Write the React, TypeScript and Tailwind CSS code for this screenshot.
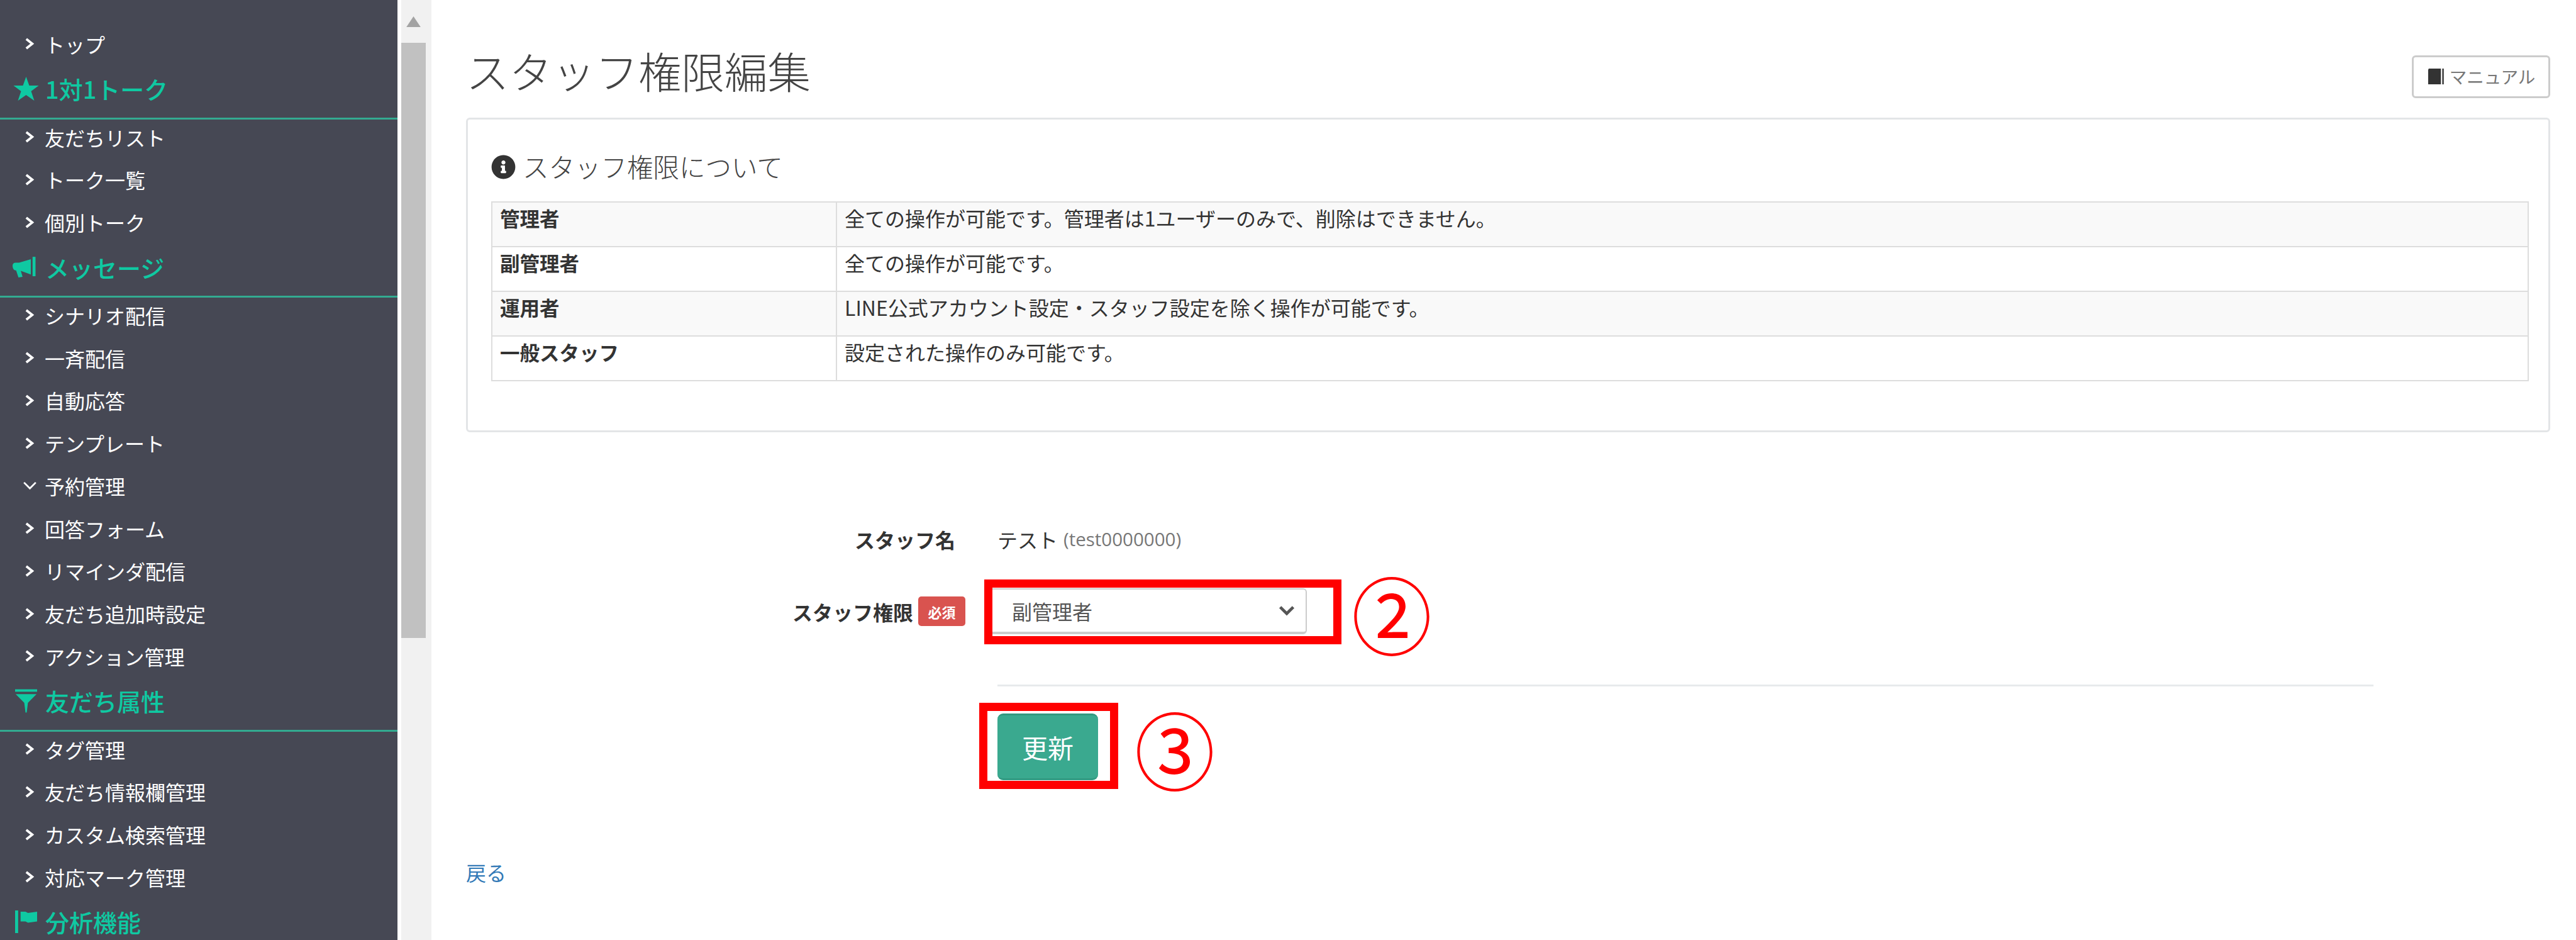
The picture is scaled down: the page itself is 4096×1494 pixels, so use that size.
import { FaInfoCircle } from "react-icons/fa";
import type { ReactNode } from "react";

const jp = "font-['Noto_Sans_CJK_JP','Noto_Sans_CJK_SC',sans-serif]";

const Star = () => (
  <svg viewBox="0 0 40 38" className="h-[38px] w-[41px]" fill="#0fc9a2">
    <path d="M20 0l5 14h15L28 23l5 15-13-9-13 9 5-15L0 14h15z" />
  </svg>
);

const Bullhorn = () => (
  <svg viewBox="0 0 46 36" className="h-[34px] w-[45px]" fill="#0fc9a2">
    <path d="M0 15c0-3 2-5 5-5h6L31 4v26L14 24l3 10-7 1-4-12H5c-3 0-5-4-5-8z" />
    <rect x="34" y="0" width="5" height="33" />
  </svg>
);

const Filter = () => (
  <svg viewBox="0 0 36 38" className="h-[38px] w-[35px]" fill="#0fc9a2">
    <rect x="0" y="0" width="36" height="4" />
    <path d="M1 8h34L21 22l-2 16h-2l-2-16z" />
  </svg>
);

const Flag = () => (
  <svg viewBox="0 0 36 37" className="h-[36px] w-[35px]" fill="#0fc9a2">
    <rect x="0" y="0" width="5" height="37" />
    <path d="M9 2h8l4 2 15-2v16l-15 2-4-2H9z" />
  </svg>
);

const Book = () => (
  <svg viewBox="0 0 28 29" className="h-[28px] w-[27px]">
    <path d="M3 1h20v26H2V3z" fill="#333" />
    <rect x="25" y="1" width="3" height="26" fill="#555" />
  </svg>
);

const Chevron = ({ open }: { open?: boolean }) => (
  <span className="flex w-[36px] shrink-0 justify-center">
    {open ? (
      <svg viewBox="0 0 24 15" className="h-[14px] w-[23px]" fill="none" stroke="#fff" strokeWidth="3">
        <path d="M2 2l10 10L22 2" />
      </svg>
    ) : (
      <svg viewBox="0 0 18 20" className="h-[19px] w-[17px]" fill="none" stroke="#fff" strokeWidth="4">
        <path d="M3 2l10 8-10 8" />
      </svg>
    )}
  </span>
);

const NavItem = ({ label, open }: { label: string; open?: boolean }) => (
  <div className="flex h-[67.75px] items-center pb-[12px] pl-[29px] text-[32px] leading-none text-white">
    <Chevron open={open} />
    <span className="ml-[6px]">{label}</span>
  </div>
);

const NavHeader = ({ icon, label }: { icon: ReactNode; label: string }) => (
  <div className="flex h-[80px] items-center border-b-[3px] border-[#33ab91] pb-[14px] pl-[20px] text-[38px] font-medium leading-none text-[#0fc9a2]">
    <span className="flex w-[43px] shrink-0 justify-center">{icon}</span>
    <span className="ml-[9px]">{label}</span>
  </div>
);

const roles = [
  ["管理者", "全ての操作が可能です。管理者は1ユーザーのみで、削除はできません。"],
  ["副管理者", "全ての操作が可能です。"],
  ["運用者", "LINE公式アカウント設定・スタッフ設定を除く操作が可能です。"],
  ["一般スタッフ", "設定された操作のみ可能です。"],
];

const RedBox = ({ className }: { className: string }) => (
  <div className={`absolute border-[13px] border-[#ff0000] ${className}`} />
);

export default function App() {
  return (
    <div className={`flex h-[1494px] w-[4096px] overflow-hidden bg-white text-[#333] ${jp}`}>
      <aside className="h-full w-[632px] shrink-0 bg-[#464854] pt-[42px]">
        <NavItem label="トップ" />
        <NavHeader icon={<Star />} label="1対1トーク" />
        <NavItem label="友だちリスト" />
        <NavItem label="トーク一覧" />
        <NavItem label="個別トーク" />
        <NavHeader icon={<Bullhorn />} label="メッセージ" />
        <NavItem label="シナリオ配信" />
        <NavItem label="一斉配信" />
        <NavItem label="自動応答" />
        <NavItem label="テンプレート" />
        <NavItem label="予約管理" open />
        <NavItem label="回答フォーム" />
        <NavItem label="リマインダ配信" />
        <NavItem label="友だち追加時設定" />
        <NavItem label="アクション管理" />
        <NavHeader icon={<Filter />} label="友だち属性" />
        <NavItem label="タグ管理" />
        <NavItem label="友だち情報欄管理" />
        <NavItem label="カスタム検索管理" />
        <NavItem label="対応マーク管理" />
        <NavHeader icon={<Flag />} label="分析機能" />
      </aside>

      {/* scrollbar */}
      <div className="h-full w-[54px] shrink-0 border-l-[6px] border-white bg-[#f1f1f1] pr-[9px]">
        <div className="flex h-[68px] items-center justify-center">
          <svg viewBox="0 0 24 18" className="h-[17px] w-[23px]" fill="#a3a3a3">
            <path d="M12 0l12 18H0z" />
          </svg>
        </div>
        <div className="h-[946px] bg-[#c1c1c1]" />
      </div>

      <main className="min-w-0 flex-1 pl-[55px] pr-[41px]">
        <div className="flex h-[187px] items-end justify-between pb-[31px]">
          <h1 className="mb-[10px] text-[68.5px] font-light leading-[68px] text-[#444]">スタッフ権限編集</h1>
          <button className="flex h-[68px] w-[220px] items-center justify-center gap-[9px] rounded-[6px] border-[3px] border-[#ccc] text-[27.5px] leading-none text-[#777]">
            <Book />
            マニュアル
          </button>
        </div>

        <section className="h-[500px] rounded-[6px] border-[3px] border-[#e3e5e7] pl-[37px] pr-[31px] pt-[50px]">
          <h2 className="mb-[30px] flex h-[50px] items-center gap-[11px] text-[41.5px] font-light leading-none text-[#444]">
            <FaInfoCircle size={39} className="text-[#333]" />
            スタッフ権限について
          </h2>
          <table className="w-full table-fixed border-collapse border-[2px] border-[#ddd] text-[32px] leading-[46px]">
            <tbody>
              {roles.map(([name, desc], i) => (
                <tr key={name} className={`h-[71px] ${i % 2 === 0 ? "bg-[#f9f9f9]" : "bg-white"}`}>
                  <th className="w-[548px] border-[2px] border-[#ddd] pb-[22px] pl-[12px] text-left text-[31.5px] font-bold">{name}</th>
                  <td className="border-[2px] border-[#ddd] pb-[22px] pl-[12px]">{desc}</td>
                </tr>
              ))}
            </tbody>
          </table>
        </section>

        <div className="mt-[133px] flex h-[73px] items-center text-[32px] leading-none">
          <label className="w-[845px] pr-[67px] text-right font-bold">スタッフ名</label>
          <span>テスト</span>
          <span className="ml-[9px] font-['Open_Sans',sans-serif] text-[29.5px] text-[#777]">(test0000000)</span>
        </div>

        <div className="mt-[42px] flex h-[73px] items-center text-[32px] leading-none">
          <div className="flex w-[845px] items-center justify-end gap-[8px] pr-[51px]">
            <label className="font-bold">スタッフ権限</label>
            <span className="flex h-[47px] w-[75px] items-center justify-center rounded-[5px] bg-[#d9534f] text-[22px] font-bold text-white">必須</span>
          </div>
          <div className="relative h-[73px] w-[488px]">
            <div className="-ml-[16px] flex h-full w-[508px] items-center justify-between rounded-[6px] border-[2px] border-b-[4px] border-[#ccc] pl-[37px] pr-[16px] text-[32px] text-[#555]">
              副管理者
              <svg viewBox="0 0 28 18" className="h-[17px] w-[28px]" fill="none" stroke="#555" strokeWidth="5">
                <path d="M3 3l11 11L25 3" />
              </svg>
            </div>
            <RedBox className="-left-[21px] -top-[14px] h-[103px] w-[568px]" />
            <span className="absolute -top-[26px] left-[563px] scale-y-[1.05] text-[128px] leading-[128px] text-[#ff0000]">②</span>
          </div>
        </div>

        <div className="ml-[845px] mt-[80px] h-[3px] w-[2188px] bg-[#e7eaec]" />

        <div className="relative ml-[845px] mt-[43px] h-[106px] w-fit">
          <button className="h-[106px] w-[160px] rounded-[9px] border-y-[3px] border-[#339880] bg-[#3aa98f] text-[41px] leading-none text-white">更新</button>
          <RedBox className="-left-[29px] -top-[17px] h-[137px] w-[221px]" />
          <span className="absolute -top-[10px] left-[218px] scale-y-[1.05] text-[128px] leading-[128px] text-[#ff0000]">③</span>
        </div>

        <a className="mt-[123px] block h-[46px] text-[32px] leading-[46px] text-[#337ab7]">戻る</a>
      </main>
    </div>
  );
}
